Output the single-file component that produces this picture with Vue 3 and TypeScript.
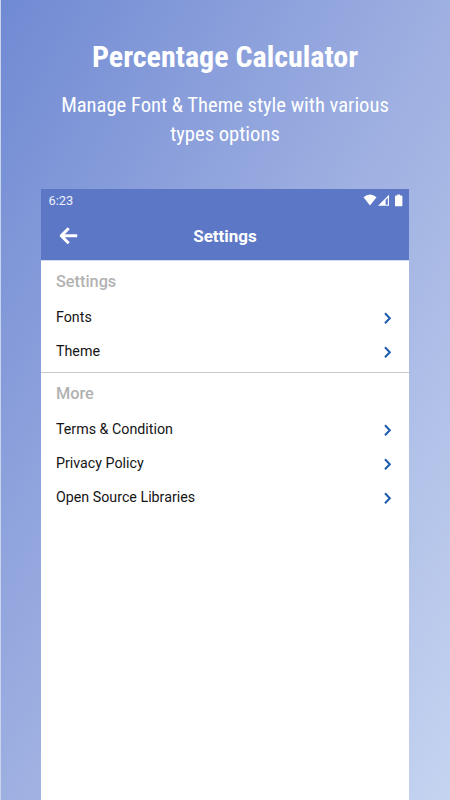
<script setup lang="ts">
interface Section {
  title: string
  items: string[]
}

const sections: Section[] = [
  { title: 'Settings', items: ['Fonts', 'Theme'] },
  { title: 'More', items: ['Terms & Condition', 'Privacy Policy', 'Open Source Libraries'] },
]
</script>

<template>
  <main class="promo">
    <h1 class="headline">Percentage Calculator</h1>
    <p class="tagline">Manage Font &amp; Theme style with various<br />types options</p>

    <section class="phone">
      <div class="status">
        <span class="time">6:23</span>
        <svg class="status-icons" width="40" height="14" viewBox="0 0 40 14" fill="#fff">
          <path d="M.5 3.2Q7-2.2 13.5 3.2L7 11.6Z" />
          <path fill-rule="evenodd" d="M15 11.7L26 .7V11.7ZM22.6 5.9V10.7H24.8V3.7Z" />
          <path d="M34.3.5h2.8v1h1.4q.9 0 .9.9v9q0 .9-.9.9h-5.6q-.9 0-.9-.9v-9q0-.9.9-.9h1.4z" />
        </svg>
      </div>
      <header class="appbar">
        <svg class="back" width="20" height="18" viewBox="0 0 20 18" fill="none" stroke="#fff" stroke-width="3">
          <path d="M9.7 1.2L2.2 8.7L9.7 16.2M2.4 8.7H18.2" stroke-linejoin="round" />
        </svg>
        <h2 class="title">Settings</h2>
      </header>
      <div v-for="section in sections" :key="section.title" class="group">
        <h3 class="group-title">{{ section.title }}</h3>
        <div v-for="item in section.items" :key="item" class="row">
          <span>{{ item }}</span>
          <svg class="chevron" width="8" height="12" viewBox="0 0 8 12" fill="none" stroke="#1c5cb0" stroke-width="2">
            <path d="M1 1.2L5.8 6.2L1 11.2" />
          </svg>
        </div>
      </div>
    </section>
  </main>
</template>

<style>
body {
  margin: 0;
}
</style>

<style scoped>
.promo {
  box-sizing: border-box;
  width: 450px;
  height: 800px;
  padding: 36px 41px 0 40px;
  display: flex;
  flex-direction: column;
  border-left: 1px solid #c8d3ee;
  overflow: hidden;
  background: linear-gradient(to bottom right, #708ad3, #9eafe1 50%, #c5d4f0);
  font-family: Roboto, sans-serif;
}
.headline,
.tagline {
  margin: 0;
  color: #fff;
  text-align: center;
  font-family: 'Roboto Condensed', Roboto, sans-serif;
  font-stretch: 75%;
  white-space: nowrap;
}
.headline {
  font-size: 30px;
  line-height: 42px;
  font-weight: 700;
}
.tagline {
  margin-top: 13px;
  font-size: 20.6px;
  line-height: 29px;
  font-weight: 400;
}
.phone {
  margin-top: 40px;
  flex: 1;
  background: #fff;
}
.status {
  box-sizing: border-box;
  height: 23px;
  padding: 0 6px 0 7.5px;
  display: flex;
  align-items: center;
  justify-content: space-between;
  background: #5c77c6;
}
.time {
  color: #eef2fc;
  font-size: 12.8px;
  line-height: 23px;
}
.appbar {
  height: 48px;
  padding: 0 18px;
  display: grid;
  grid-template-columns: 20px 1fr 20px;
  align-items: center;
  background: #5c77c6;
  border-bottom: 1px solid #d3dcf2;
}
.title {
  margin: 0;
  color: #fff;
  text-align: center;
  font-size: 17px;
  line-height: 20px;
  font-weight: 700;
}
.group {
  padding: 4px 17px 4px 15px;
}
.group + .group {
  border-top: 1px solid #c8c8c8;
}
.group-title {
  margin: 0 0 1px;
  color: #b2b2b2;
  font-size: 16.3px;
  line-height: 34px;
  font-weight: 500;
}
.row {
  height: 34px;
  display: flex;
  align-items: center;
  justify-content: space-between;
  color: #151515;
  font-size: 14.25px;
}
.chevron {
  margin-top: 2px;
}
</style>
